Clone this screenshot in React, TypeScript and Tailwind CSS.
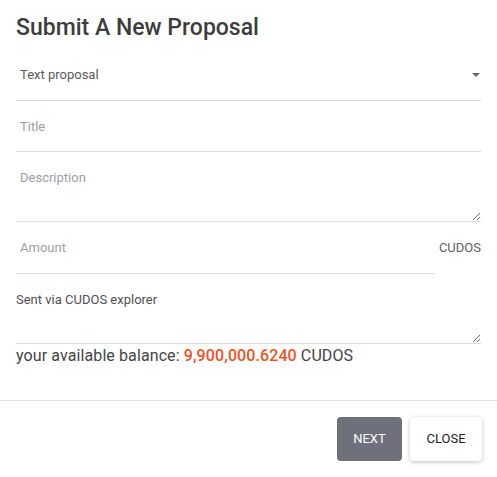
import React, { useState } from 'react';

export default function App() {
    const [amount, setAmount] = useState('');
    const [memo, setMemo] = useState('Sent via CUDOS explorer');

    return (
        <div className="w-[497px] h-[477px] bg-white font-['Roboto',sans-serif] text-[#444]">
            <div className="px-4">
                <div className="h-[48px] pt-[14px]">
                    <h1 className="text-[23px] leading-[28px] font-medium text-[#3d3d3d]">Submit A New Proposal</h1>
                </div>
                <div className="h-[53px] border-b border-[#dcdcdc] flex items-center justify-between pt-[2px] pl-1 pr-[1px]">
                    <span className="text-[13px] text-[#5a5a5a]">Text proposal</span>
                    <svg width="8" height="4" viewBox="0 0 8 4">
                        <path d="M0 0h8L4 4z" fill="#666" />
                    </svg>
                </div>
                <input
                    className="block w-full h-[51px] pt-[1px] pl-1 border-b border-[#dcdcdc] text-[13px] outline-none placeholder:text-[#9e9e9e]"
                    placeholder="Title"
                />
                <textarea
                    className="block w-full h-[70px] pt-[18px] pl-1 leading-4 border-b border-[#dcdcdc] text-[13px] outline-none placeholder:text-[#9e9e9e]"
                    placeholder="Description"
                />
                <div className="flex h-[52px]">
                    <input
                        value={amount}
                        onChange={(e) => setAmount(e.target.value)}
                        className="block w-[419px] h-[52px] pl-1 border-b border-[#dcdcdc] text-[13px] outline-none placeholder:text-[#9e9e9e]"
                        placeholder="Amount"
                    />
                    <span className="ml-auto pt-[18px] text-[13px] leading-4 text-[#606060]">CUDOS</span>
                </div>
                <textarea
                    value={memo}
                    onChange={(e) => setMemo(e.target.value)}
                    className="block w-full h-[70px] pt-[18px] leading-4 border-b border-[#dcdcdc] text-[13px] text-[#505050] outline-none"
                />
                <p className="mt-[2px] text-[16px] leading-5 tracking-[0.1px] text-[#444]">
                    your available balance: <span className="font-medium text-[#f4511e]">9,900,000.6240</span> CUDOS
                </p>
            </div>
            <div className="mt-[34px] border-t border-[#e2e5ea] flex justify-end gap-2 px-[15px] pt-4">
                <button className="w-[65px] h-[44px] rounded bg-[#6e707c] text-white text-[13px] uppercase">Next</button>
                <button className="w-[72px] h-[44px] rounded bg-white text-[#222] text-[13px] uppercase shadow-[0_1px_4px_rgba(0,0,0,0.25)]">Close</button>
            </div>
        </div>
    );
}
